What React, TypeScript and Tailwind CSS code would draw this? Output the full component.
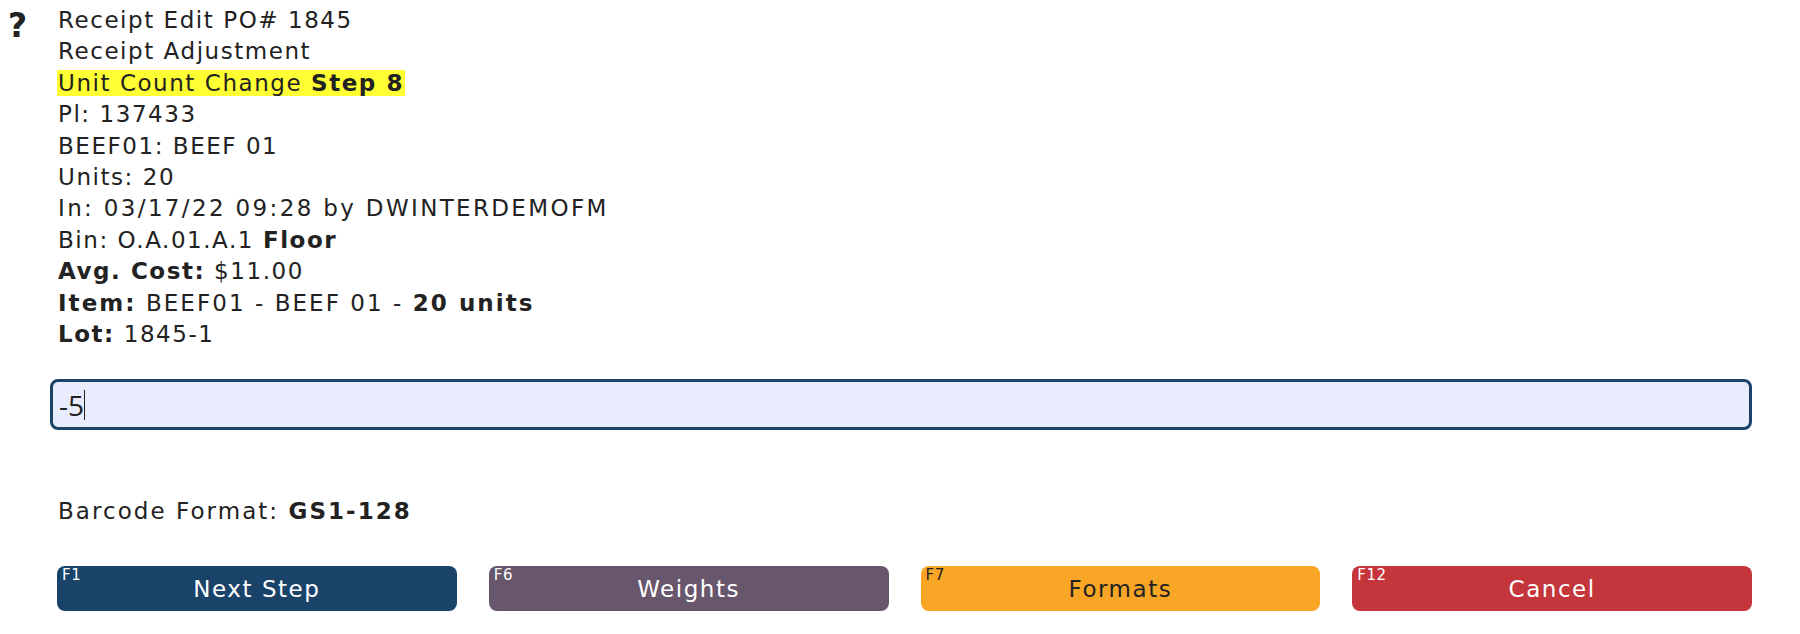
const lines = [
  { label: "", text: "Receipt Edit PO# 1845" },
  { label: "", text: "Receipt Adjustment" },
];

const buttons = [
  { key: "F1", label: "Next Step", cls: "bg-[#1a436a] text-white" },
  { key: "F6", label: "Weights", cls: "bg-[#68566d] text-white" },
  { key: "F7", label: "Formats", cls: "bg-[#f9a526] text-[#222]" },
  { key: "F12", label: "Cancel", cls: "bg-[#c4363b] text-white" },
];

const App = () => {
  return (
    <div
      className="w-[1800px] h-[634px] bg-white text-[#222] flex tracking-[1.55px]"
      style={{ fontFamily: "'DejaVu Sans', Verdana, sans-serif" }}
    >
      <div className="w-[50px] pl-[8px] pt-[9px] text-[33px] font-bold leading-none tracking-normal">?</div>

      <div className="flex flex-col w-[1702px]">
        <div className="pt-[5px] pl-[8px] text-[23px] leading-[31.4px]">
          {lines.map((l) => (
            <div key={l.text}>{l.text}</div>
          ))}
          <div>
            <span className="bg-[#ffff33] px-[1px] -ml-[1px]">
              Unit Count Change <b>Step 8</b>
            </span>
          </div>
          <div>Pl: 137433</div>
          <div>BEEF01: BEEF 01</div>
          <div>Units: 20</div>
          <div className="tracking-[2.35px]">In: 03/17/22 09:28 by DWINTERDEMOFM</div>
          <div>
            Bin: O.A.01.A.1 <b>Floor</b>
          </div>
          <div>
            <b>Avg. Cost:</b> $11.00
          </div>
          <div className="tracking-[2.05px]">
            <b>Item:</b> BEEF01 - BEEF 01 - <b>20 units</b>
          </div>
          <div>
            <b>Lot:</b> 1845-1
          </div>
        </div>

        <div
          className="mt-[29px] h-[51px] border-[3px] border-[#1a436a] rounded-[8px] bg-[#e8ecfc] flex items-center pl-[6px] text-[28px] tracking-normal"
          style={{ fontFamily: "'Open Sans', 'DejaVu Sans', sans-serif" }}
        >
          <span>-5</span>
          <span className="w-[1px] h-[30px] bg-[#222]"></span>
        </div>

        <div className="mt-[66px] pl-[8px] text-[23px] leading-[31px] tracking-[2.05px]">
          Barcode Format: <b>GS1-128</b>
        </div>

        <div className="mt-[39px] pl-[7px] flex gap-[32px]">
          {buttons.map((b) => (
            <div
              key={b.key}
              className={`relative w-[400px] h-[45px] rounded-[8px] flex items-center justify-center text-[23px] ${b.cls}`}
            >
              <span className="absolute left-[5px] top-[2px] text-[15px] leading-none tracking-[0.5px]">{b.key}</span>
              {b.label}
            </div>
          ))}
        </div>
      </div>
    </div>
  );
};

export default App;
